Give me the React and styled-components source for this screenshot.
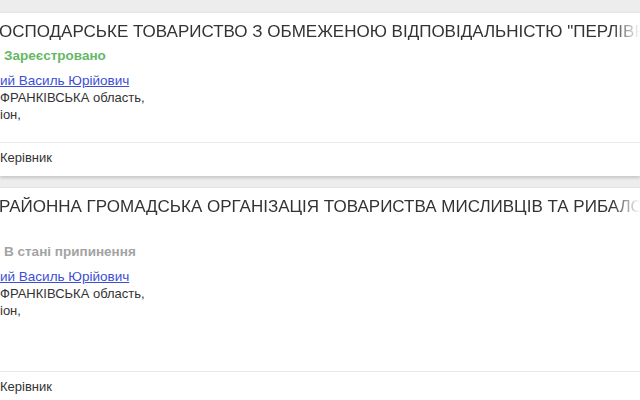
import styled, { createGlobalStyle } from "styled-components";

const GlobalStyle = createGlobalStyle`
    html, body {
        margin: 0;
        padding: 0;
        background: #ededed;
        overflow: hidden;
    }
    body {
        font-family: "Liberation Sans", Arial, sans-serif;
        color: #333;
    }
`

const List = styled.div`
    display: flex;
    flex-direction: column;
    gap: 11px;
    padding-top: 12px;
`
const Card = styled.div`
    background: #fff;
    border-top: 1px solid #e4e4e4;
    box-shadow: 0 2px 3px rgba(0,0,0,.16);
`
const CardBody = styled.div`
    padding: 8px 0 19px 0;
    border-bottom: 1px solid #e9e9e9;
`
const Title = styled.div`
    font-size: 17px;
    line-height: 21px;
    white-space: nowrap;
    overflow: hidden;
    margin-left: -1px;
    -webkit-mask-image: linear-gradient(to right, #000 calc(100% - 28px), transparent);
    mask-image: linear-gradient(to right, #000 calc(100% - 28px), transparent);
`
const Status = styled.div`
    margin-top: ${props => props.$gap}px;
    margin-left: 4px;
    font-size: 13.5px;
    line-height: 20px;
    font-weight: bold;
    color: ${props => props.$active ? '#66b866' : '#a3a3a3'};
`
const Person = styled.a`
    display: block;
    margin-top: 6px;
    font-size: 13.5px;
    line-height: 18px;
    color: #3b4fd6;
    text-decoration: underline;
    white-space: nowrap;
`
const Address = styled.div`
    font-size: 13px;
    line-height: 16.5px;
    white-space: pre;
`
const Footer = styled.div`
    padding: 5px 0 8px 0;
    font-size: 13px;
    line-height: 20px;
    white-space: nowrap;
`

const companies = [
    {
        title: "ОСПОДАРСЬКЕ ТОВАРИСТВО З ОБМЕЖЕНОЮ ВІДПОВІДАЛЬНІСТЮ \"ПЕРЛІВКА\"",
        statusGap: 4,
        active: true,
        status: "Зареєстровано",
        person: "ий Василь Юрійович",
        address: ["ФРАНКІВСЬКА область,", "іон,"],
        role: "Керівник",
    },
    {
        title: "РАЙОННА ГРОМАДСЬКА ОРГАНІЗАЦІЯ ТОВАРИСТВА МИСЛИВЦІВ ТА РИБАЛОК",
        statusGap: 25,
        active: false,
        status: "В стані припинення",
        person: "ий Василь Юрійович",
        address: ["ФРАНКІВСЬКА область,", "іон,", " ", " "],
        role: "Керівник",
    },
]

const App = () => {
  return (
      <>
          <GlobalStyle />
          <List>
              {companies.map((c, i) => (
                  <Card key={i}>
                      <CardBody>
                          <Title>{c.title}</Title>
                          <Status $gap={c.statusGap} $active={c.active}>{c.status}</Status>
                          <Person href="#">{c.person}</Person>
                          {c.address.map((line, j) => (
                              <Address key={j}>{line}</Address>
                          ))}
                      </CardBody>
                      <Footer>{c.role}</Footer>
                  </Card>
              ))}
          </List>
      </>
  );
};

export default App;
